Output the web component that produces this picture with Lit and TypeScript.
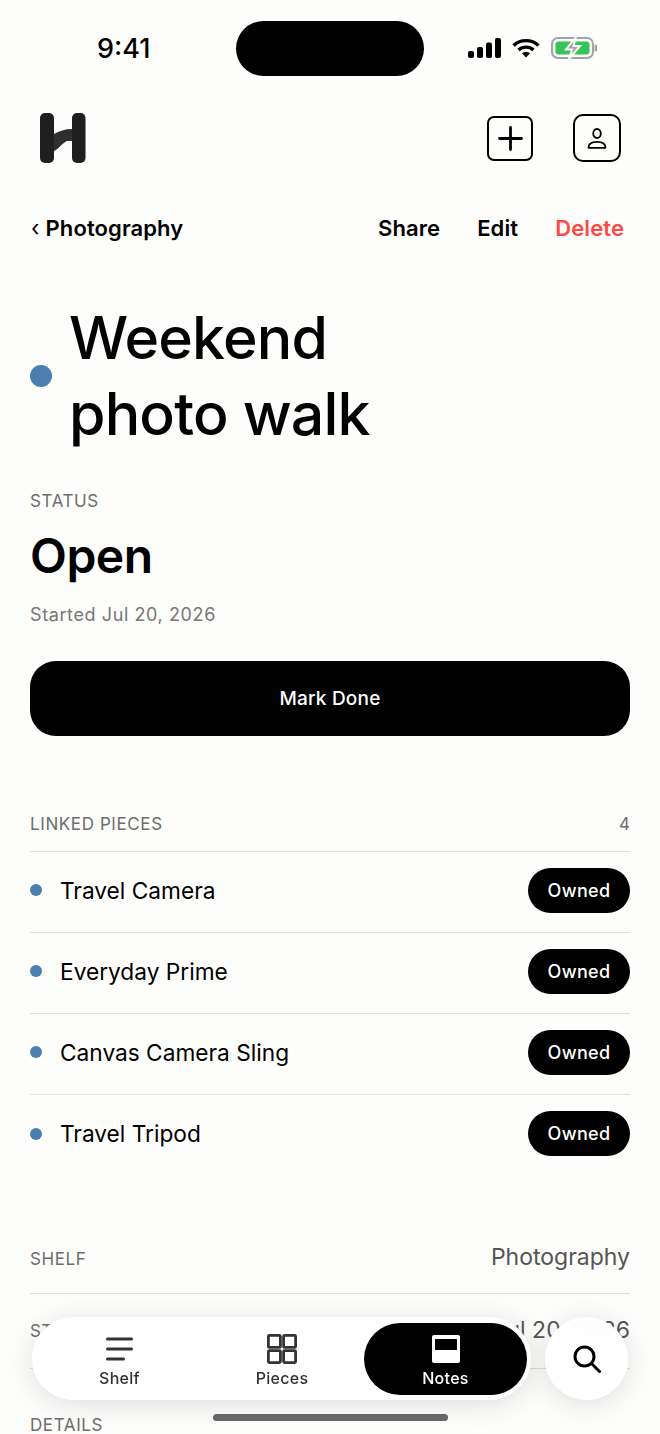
import { LitElement, html, css } from 'lit';
import { customElement } from 'lit/decorators.js';

const PIECES = ['Travel Camera', 'Everyday Prime', 'Canvas Camera Sling', 'Travel Tripod'];

@customElement('app-root')
export class AppRoot extends LitElement {
  static styles = css`
    :host {
      display: block;
      position: relative;
      width: 660px;
      height: 1434px;
      overflow: hidden;
      background: #fdfdfb;
      color: #000;
      font-family: Inter, 'Liberation Sans', sans-serif;
    }
    .status {
      display: grid;
      grid-template-columns: 1fr 188px 1fr;
      align-items: center;
      height: 55px;
      margin-top: 21px;
    }
    .time {
      justify-self: start;
      margin-left: 97px;
      font-size: 27px;
      font-weight: 500;
    }
    .island {
      height: 55px;
      border-radius: 28px;
      background: #000;
    }
    .status-icons {
      display: flex;
      align-items: center;
      gap: 11px;
      margin-left: 44px;
      margin-top: -1px;
    }
    .status-icons svg { display: block; }
    .top {
      display: flex;
      align-items: center;
      height: 50px;
      margin-top: 37px;
      padding: 0 39px 0 38px;
    }
    .logo { display: block; }
    .top-actions {
      display: flex;
      align-items: center;
      gap: 40px;
      margin-left: auto;
    }
    .icon-btn {
      display: flex;
      align-items: center;
      justify-content: center;
      box-sizing: border-box;
      border: 2.5px solid #000;
      border-radius: 7px;
      width: 46px;
      height: 45px;
    }
    .icon-btn.user {
      width: 48px;
      height: 48px;
      border-radius: 10px;
    }
    .crumbs {
      display: flex;
      align-items: center;
      height: 30px;
      margin-top: 50px;
      padding: 0 30px;
      font-size: 22px;
      font-weight: 600;
      letter-spacing: 0.1px;
    }
    .chevron {
      margin: 0 6px 0 1px;
      font-weight: 400;
    }
    .crumb-actions {
      display: flex;
      gap: 37px;
      margin-left: auto;
      padding-right: 6px;
    }
    .danger { color: #fa4b46; }
    .title-row {
      display: flex;
      align-items: center;
      gap: 17px;
      margin-top: 57px;
      padding: 0 30px;
    }
    .title-dot {
      flex: none;
      width: 22px;
      height: 22px;
      border-radius: 50%;
      background: #4a7fb0;
    }
    h1 {
      margin: 0;
      font-size: 59px;
      font-weight: 500;
      line-height: 76px;
      letter-spacing: -0.8px;
    }
    .label {
      font-size: 17px;
      color: #6e6e6e;
      letter-spacing: 0.6px;
    }
    .status-block {
      display: flex;
      flex-direction: column;
      margin-top: 39px;
      padding: 0 30px;
    }
    .status-value {
      margin-top: 17px;
      font-size: 48px;
      font-weight: 600;
      line-height: 56px;
      letter-spacing: -0.5px;
    }
    .started {
      margin-top: 20px;
      font-size: 18px;
      color: #777;
      letter-spacing: 0.6px;
    }
    .mark-done {
      display: flex;
      align-items: center;
      justify-content: center;
      height: 75px;
      margin: 36px 30px 0;
      border-radius: 26px;
      background: #000;
      color: #fff;
      font-size: 19px;
      font-weight: 500;
      letter-spacing: 0.2px;
    }
    .section {
      margin: 0 30px;
    }
    .section-head {
      display: flex;
      justify-content: space-between;
      align-items: center;
      height: 36px;
      margin-top: 70px;
      padding-bottom: 9px;
      border-bottom: 1.5px solid #dfdfdd;
    }
    .count { font-size: 17px; color: #6e6e6e; }
    .piece {
      display: flex;
      align-items: center;
      box-sizing: border-box;
      height: 81px;
      padding-bottom: 4px;
      border-bottom: 1.5px solid #dfdfdd;
      font-size: 22.7px;
    }
    .piece:last-child { border-bottom: 0; }
    .piece-dot {
      flex: none;
      width: 12px;
      height: 12px;
      margin-right: 18px;
      border-radius: 50%;
      background: #4a7fb0;
    }
    .pill {
      display: flex;
      align-items: center;
      justify-content: center;
      width: 102px;
      height: 45px;
      margin-left: auto;
      border-radius: 23px;
      background: #000;
      color: #fff;
      font-size: 18px;
      font-weight: 500;
      letter-spacing: 0.3px;
    }
    .meta {
      display: flex;
      justify-content: space-between;
      align-items: center;
      box-sizing: border-box;
      height: 75px;
      border-bottom: 1.5px solid #dfdfdd;
    }
    .meta.first {
      height: 70px;
      margin-top: 48px;
    }
    .meta-value {
      margin-top: -3px;
      font-size: 23px;
      color: #555;
    }
    .details { margin-top: 46px; }
    .nav {
      position: absolute;
      left: 32px;
      top: 1317px;
      display: flex;
      gap: 14px;
    }
    .tabs {
      display: grid;
      grid-template-columns: 167px 158px 166px;
      align-items: center;
      box-sizing: border-box;
      width: 499px;
      height: 83px;
      padding: 0 4px;
      border-radius: 42px;
      background: rgba(255, 255, 255, 0.94);
      backdrop-filter: blur(8px);
      box-shadow: 0 4px 30px rgba(0, 0, 0, 0.12);
    }
    .tab {
      display: flex;
      flex-direction: column;
      align-items: center;
      box-sizing: border-box;
      height: 72px;
      padding-top: 11px;
      gap: 4px;
      border-radius: 36px;
      font-size: 16px;
      font-weight: 500;
      letter-spacing: 0.3px;
      color: #333;
    }
    .slot {
      display: flex;
      align-items: center;
      height: 30px;
    }
    .tab svg { display: block; }
    .tab.active {
      margin-left: 3px;
      background: #000;
      color: #fff;
    }
    .search {
      display: flex;
      align-items: center;
      justify-content: center;
      width: 83px;
      height: 83px;
      border-radius: 50%;
      background: rgba(255, 255, 255, 0.94);
      backdrop-filter: blur(8px);
      box-shadow: 0 4px 30px rgba(0, 0, 0, 0.12);
    }
    .home {
      position: absolute;
      left: 213px;
      top: 1414px;
      width: 235px;
      height: 7px;
      border-radius: 4px;
      background: #666;
    }
  `;

  render() {
    return html`
      <div class="status">
        <span class="time">9:41</span>
        <div class="island"></div>
        <div class="status-icons">
          <svg width="33" height="20" viewBox="0 0 33 20" fill="#000">
            <rect x="0" y="13" width="6" height="7" rx="2" />
            <rect x="9" y="9" width="6" height="11" rx="2" />
            <rect x="18" y="4.5" width="6" height="15.5" rx="2" />
            <rect x="27" y="0" width="6" height="20" rx="2" />
          </svg>
          <svg width="28" height="20" viewBox="0 0 28 20" fill="none" stroke="#000" stroke-width="3.4">
            <path d="M1.5 7.5c7-6.500 18-6.500 25 0" />
            <path d="M6.500 12c4.300-3.800 10.700-3.800 15 0" />
            <path d="M14 19.500l-4-4.200c2.300-1.700 5.700-1.700 8 0z" fill="#000" stroke="none" />
          </svg>
          <svg width="46" height="22" viewBox="0 0 46 22" fill="none">
            <rect x="1" y="1" width="41" height="20" rx="6" stroke="#a3a3a3" stroke-width="2" />
            <rect x="4.500" y="4.500" width="34" height="13" rx="3" fill="#34c45a" />
            <rect x="43.500" y="7.500" width="2.500" height="7" rx="1.200" fill="#a3a3a3" />
            <path d="M25 0l-10 12.500h6L18 22l11-13h-6.500z" fill="#a3a3a3" stroke="#fdfdfb" stroke-width="2" />
          </svg>
        </div>
      </div>

      <div class="top">
        <svg class="logo" width="48" height="50" viewBox="0 0 48 50">
          <path d="M16 21c5-3 11-5 18-5v12h-5c-5 2-8 8-13 10z" fill="#2f2f30" />
          <rect x="2" y="0" width="14" height="50" rx="5" fill="#1f1f20" />
          <rect x="34" y="0" width="13.500" height="50" rx="5" fill="#1f1f20" />
        </svg>
        <div class="top-actions">
          <div class="icon-btn">
            <svg width="25" height="25" viewBox="0 0 25 25" fill="none" stroke="#000" stroke-width="2.800" stroke-linecap="round">
              <path d="M12.500 1.500v22M1.500 12.500h22" />
            </svg>
          </div>
          <div class="icon-btn user">
            <svg width="20" height="21" viewBox="0 0 20 21" fill="none" stroke="#000" stroke-width="1.800">
              <ellipse cx="10" cy="5.500" rx="3.800" ry="4.500" />
              <path d="M1.500 19.800c0-4.300 3.500-6 8.500-6s8.500 1.700 8.500 6z" stroke-linejoin="round" />
            </svg>
          </div>
        </div>
      </div>

      <div class="crumbs">
        <span class="chevron">‹</span>
        <span>Photography</span>
        <div class="crumb-actions">
          <span>Share</span>
          <span>Edit</span>
          <span class="danger">Delete</span>
        </div>
      </div>

      <div class="title-row">
        <span class="title-dot"></span>
        <h1>Weekend<br />photo walk</h1>
      </div>

      <div class="status-block">
        <span class="label">STATUS</span>
        <span class="status-value">Open</span>
        <span class="started">Started Jul 20, 2026</span>
      </div>

      <div class="mark-done">Mark Done</div>

      <div class="section">
        <div class="section-head">
          <span class="label">LINKED PIECES</span>
          <span class="count">4</span>
        </div>
        ${PIECES.map(
          (name) => html`
            <div class="piece">
              <span class="piece-dot"></span>
              <span>${name}</span>
              <span class="pill">Owned</span>
            </div>
          `
        )}
      </div>

      <div class="section">
        <div class="meta first">
          <span class="label">SHELF</span>
          <span class="meta-value">Photography</span>
        </div>
        <div class="meta">
          <span class="label">STARTED</span>
          <span class="meta-value">Jul 20, 2026</span>
        </div>
        <div class="details"><span class="label">DETAILS</span></div>
      </div>

      <div class="nav">
        <div class="tabs">
          <div class="tab">
            <div class="slot">
              <svg width="27" height="24" viewBox="0 0 27 24" fill="none" stroke="#333" stroke-width="3" stroke-linecap="round">
                <path d="M1.500 2h24M1.500 12h24M1.500 22h16" />
              </svg>
            </div>
            <span>Shelf</span>
          </div>
          <div class="tab">
            <div class="slot">
              <svg width="30" height="30" viewBox="0 0 30 30" fill="none" stroke="#333" stroke-width="2.800">
                <rect x="1.400" y="1.400" width="12" height="12" rx="1" />
                <rect x="16.600" y="1.400" width="12" height="12" rx="1" />
                <rect x="1.400" y="16.600" width="12" height="12" rx="1" />
                <rect x="16.600" y="16.600" width="12" height="12" rx="1" />
              </svg>
            </div>
            <span>Pieces</span>
          </div>
          <div class="tab active">
            <div class="slot">
              <svg width="28" height="28" viewBox="0 0 28 28">
                <rect width="28" height="28" rx="2" fill="#fff" />
                <rect x="3" y="4" width="22" height="11" fill="#000" />
              </svg>
            </div>
            <span>Notes</span>
          </div>
        </div>
        <div class="search">
          <svg width="28" height="28" viewBox="0 0 28 28" fill="none" stroke="#000" stroke-width="3" stroke-linecap="round">
            <circle cx="11.500" cy="11.500" r="9.500" />
            <path d="M18.500 18.500l8 8" />
          </svg>
        </div>
      </div>
      <div class="home"></div>
    `;
  }
}
